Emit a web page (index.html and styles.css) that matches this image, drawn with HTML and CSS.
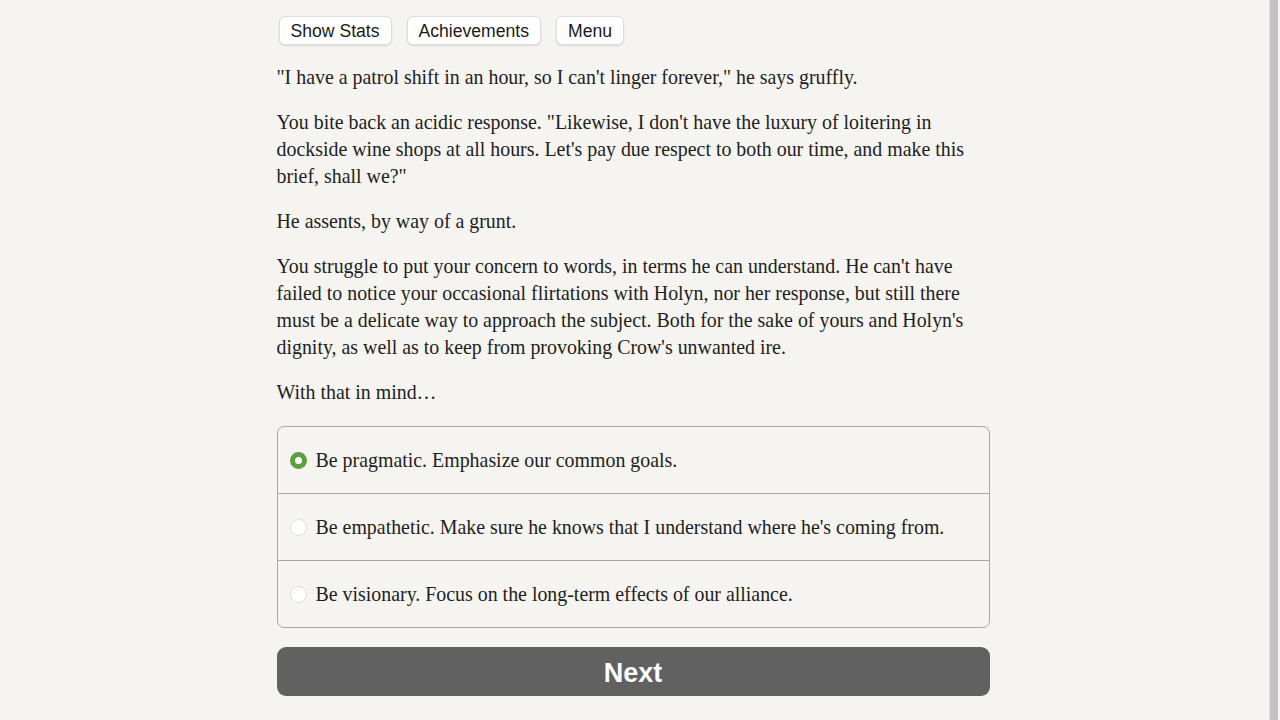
FILE: index.html
```html
<!DOCTYPE html>
<html lang="en">
<head>
    <meta charset="UTF-8">
    <meta name="viewport" content="width=device-width, initial-scale=1.0">
    <title>Crow</title>
    <link rel="stylesheet" href="styles.css">
</head>
<body>
    <div class="container">
        <div class="buttons">
            <button class="spacedLink">Show Stats</button>
            <button class="spacedLink">Achievements</button>
            <button class="spacedLink">Menu</button>
        </div>

        <div id="text">
            <p>"I have a patrol shift in an hour, so I can't linger forever," he says gruffly.</p>
            <p>You bite back an acidic response. "Likewise, I don't have the luxury of loitering in dockside wine shops at all hours. Let's pay due respect to both our time, and make this brief, shall we?"</p>
            <p>He assents, by way of a grunt.</p>
            <p>You struggle to put your concern to words, in terms he can understand. He can't have failed to notice your occasional flirtations with Holyn, nor her response, but still there must be a delicate way to approach the subject. Both for the sake of yours and Holyn's dignity, as well as to keep from provoking Crow's unwanted ire.</p>
            <p>With that in mind&hellip;</p>
        </div>

        <form class="choice">
            <label class="option">
                <span class="radio checked"></span>
                <span>Be pragmatic. Emphasize our common goals.</span>
            </label>
            <label class="option">
                <span class="radio"></span>
                <span>Be empathetic. Make sure he knows that I understand where he's coming from.</span>
            </label>
            <label class="option">
                <span class="radio"></span>
                <span>Be visionary. Focus on the long-term effects of our alliance.</span>
            </label>
        </form>

        <button class="next">Next</button>
    </div>
    <div class="scrollbar"></div>
</body>
</html>
```

FILE: styles.css
```css
/* Page */
body {
    margin: 0;
    background-color: #f5f4f0;
    color: #1e1e1e;
    font-family: "Liberation Serif", serif;
}

.container {
    width: 713px;
    margin: 0 auto;
    padding-top: 16px;
    position: relative;
    left: -7px;
}

/* Top buttons */
.buttons {
    display: flex;
    gap: 15px;
    padding-left: 2px;
}

.spacedLink {
    font-family: "Liberation Sans", Arial, sans-serif;
    font-size: 17.6px;
    color: #1a1a1a;
    background-color: #ffffff;
    border: 1px solid #dedcd8;
    border-radius: 6px;
    box-shadow: 0 1px 2px rgba(0, 0, 0, 0.12);
    height: 29px;
    padding: 2px 11px 0 11px;
}

/* Story text */
#text {
    margin-top: 19px;
    font-size: 19.9px;
    line-height: 27px;
}

#text p {
    margin: 0 0 18px 0;
}

/* Choices */
.choice {
    margin-top: 20px;
    border: 1px solid #a9a8a5;
    border-radius: 7px;
    overflow: hidden;
}

.option {
    display: flex;
    align-items: center;
    gap: 9px;
    height: 66px;
    padding-left: 12px;
    font-size: 19.9px;
    border-top: 1px solid #a9a8a5;
}

.option:first-child {
    border-top: none;
}

.radio {
    width: 15px;
    height: 15px;
    border-radius: 50%;
    background-color: #ffffff;
    border: 1px solid #dcdcdc;
    flex-shrink: 0;
}

.radio.checked {
    background-color: #ffffff;
    border: 5px solid #5c9f3e;
    width: 7px;
    height: 7px;
}

/* Next button */
.next {
    display: block;
    width: 100%;
    margin-top: 19px;
    height: 49px;
    padding-top: 4px;
    border: none;
    border-radius: 9px;
    background-color: #616161;
    color: #ffffff;
    font-family: "Liberation Sans", Arial, sans-serif;
    font-weight: bold;
    font-size: 27px;
}

/* Fake scrollbar on the right edge */
.scrollbar {
    position: fixed;
    top: 0;
    right: 2px;
    width: 8px;
    height: 100%;
    background-color: #c1c1c5;
    border-left: 1px solid #e2e2e2;
}
```
